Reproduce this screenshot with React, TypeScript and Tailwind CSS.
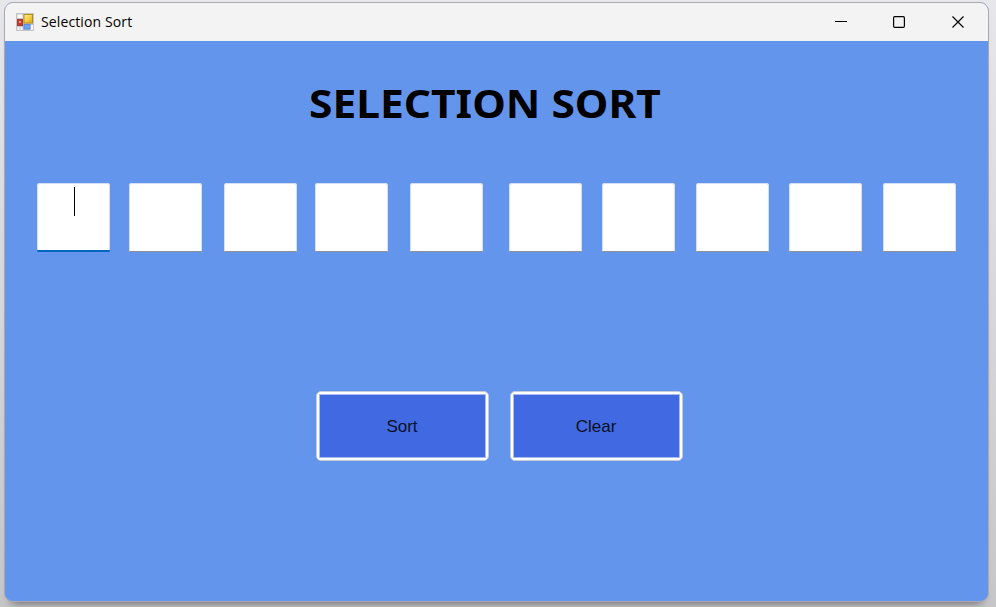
const gaps = [
  'ml-0', 'ml-[18.5px]', 'ml-[22px]', 'ml-[18.5px]', 'ml-[22px]',
  'ml-[26px]', 'ml-5', 'ml-[21px]', 'ml-5', 'ml-[21px]',
];

function AppIcon() {
  return (
    <svg width="18" height="18" viewBox="0 0 18 18" className="shrink-0">
      <defs>
        <linearGradient id="gold" x1="0" y1="0" x2="1" y2="1">
          <stop offset="0" stopColor="#fff0a0" />
          <stop offset=".5" stopColor="#f6cf45" />
          <stop offset="1" stopColor="#dba617" />
        </linearGradient>
      </defs>
      <rect width="18" height="18" fill="#c6c6c6" />
      <rect x="1.5" y="1.5" width="5" height="3.5" fill="#fafafa" />
      <rect x="1.5" y="14" width="2" height="3" fill="#f5f5f5" />
      <rect x="4.5" y="14" width="2" height="3" fill="#f5f5f5" />
      <rect x="14.5" y="12" width="2.5" height="5" fill="#f5f5f5" />
      <rect x="1.5" y="6.5" width="5" height="6" fill="#c63a2d" stroke="#a83a30" />
      <rect x="3" y="8" width="2" height="2" fill="#ec9186" />
      <rect x="8" y="1.5" width="8.5" height="8.5" fill="url(#gold)" stroke="#b98b1b" />
      <rect x="8" y="11.5" width="6" height="4.5" fill="#6da5f4" stroke="#5a8bdc" />
    </svg>
  );
}

function NumberBox({ gap, focused }: { gap: string; focused: boolean }) {
  return (
    <div
      className={`${gap} flex h-[69px] w-[73px] shrink-0 flex-col items-center overflow-hidden rounded-t-[3px] rounded-b-[1px] bg-white shadow-[inset_0_0_0_1px_#d3dff5]`}
    >
      {focused && <div className="ml-0.5 mt-1 h-[29px] w-px shrink-0 bg-black" />}
      <div className={`mt-auto w-full ${focused ? 'h-0.5 bg-[#0067c0]' : 'h-px bg-[#8e9193]'}`} />
    </div>
  );
}

function ActionButton({ label }: { label: string }) {
  return (
    <button className="h-[70px] w-[173px] rounded-[5px] border border-[#c5cbd6] bg-white p-[2px]">
      <span className="flex h-full items-center justify-center border border-[#a9bbf0] bg-[#4169e1] pr-px font-['Liberation_Sans',sans-serif] text-[17px] leading-none text-[#0b1026]">
        {label}
      </span>
    </button>
  );
}

export default function App() {
  return (
    <div className="h-[607px] w-[996px] overflow-hidden bg-[linear-gradient(to_bottom,#e6e6eb_0%,#d8d8dc_50%,#c6c6c8_100%)] pl-1 pt-0.5">
      <div className="flex h-[600px] w-[985px] flex-col overflow-hidden rounded-[9px] border border-[#a9a9ae] bg-[#6495ed] shadow-[0_8px_8px_-7px_rgba(0,0,0,0.5)]">
        <header className="flex h-[38px] shrink-0 items-center bg-[#f3f3f3] pl-[11px]">
          <AppIcon />
          <span className="-mt-0.5 ml-[7px] w-[110px] whitespace-nowrap font-['Open_Sans',sans-serif] text-[14px] tracking-[0.12px] text-black">
            Selection Sort
          </span>
          <svg width="130" height="14" viewBox="0 0 130 14" className="ml-auto mr-[23px]" fill="none" stroke="#000">
            <path d="M0 6.5h12" />
            <rect x="58.6" y="1.6" width="10.8" height="10.8" rx="1.2" strokeWidth="1.2" />
            <path d="M117.5 1.5l11 11M128.5 1.5l-11 11" strokeWidth="1.2" />
          </svg>
        </header>
        <main className="flex flex-1 flex-col">
          <h1 className="mb-px ml-[304px] mt-[34px] h-[56px] origin-left scale-x-[1.09] whitespace-nowrap font-['Noto_Sans',sans-serif] text-[39px] font-bold leading-[56px] text-black">
            SELECTION SORT
          </h1>
          <div className="ml-8 mt-[51px] flex h-[70px]">
            {gaps.map((gap, i) => (
              <NumberBox key={i} gap={gap} focused={i === 0} />
            ))}
          </div>
          <div className="ml-[311px] mt-[138px] flex gap-[21px]">
            <ActionButton label="Sort" />
            <ActionButton label="Clear" />
          </div>
        </main>
      </div>
    </div>
  );
}
